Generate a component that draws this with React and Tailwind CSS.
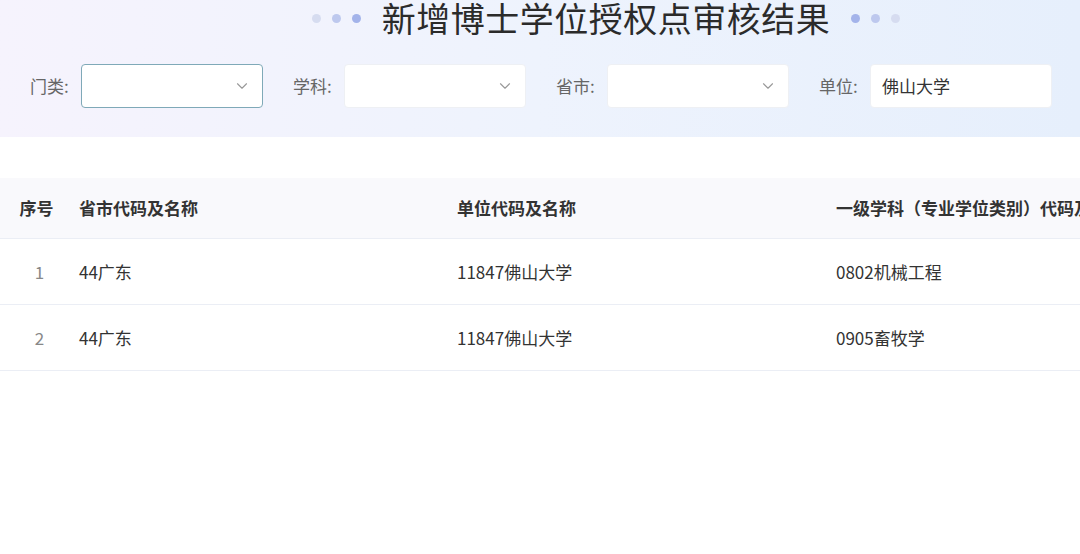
import { ChevronDown } from 'lucide-react';

const FILTERS = [
  { label: '门类', value: '', select: true, focused: true },
  { label: '学科', value: '', select: true },
  { label: '省市', value: '', select: true },
  { label: '单位', value: '佛山大学', select: false },
];

const ROWS = [
  { no: 1, province: '44广东', unit: '11847佛山大学', subject: '0802机械工程' },
  { no: 2, province: '44广东', unit: '11847佛山大学', subject: '0905畜牧学' },
];

export default function App() {
  return (
    <div
      className="w-[1080px] h-[554px] overflow-hidden bg-white text-[#333]"
      style={{ fontFamily: '"Noto Sans CJK SC", "Noto Sans", sans-serif' }}
    >
      {/* Header with gradient */}
      <div className="h-[137px] bg-gradient-to-r from-[#f6f3fd] via-[#eef3fd] to-[#e6effc]">
        <div className="flex items-center justify-center h-[36px] gap-[21px] pl-[132px]">
          <div className="flex items-center gap-[11px]">
            <span className="w-[9px] h-[9px] rounded-full bg-[#d6dcf0]" />
            <span className="w-[9px] h-[9px] rounded-full bg-[#bdc8ee]" />
            <span className="w-[9px] h-[9px] rounded-full bg-[#a3b3ea]" />
          </div>
          <h1 className="text-[34px] leading-[36px] font-normal text-[#2b2b2b] tracking-[0.5px] whitespace-nowrap">
            新增博士学位授权点审核结果
          </h1>
          <div className="flex items-center gap-[11px]">
            <span className="w-[9px] h-[9px] rounded-full bg-[#a3b3ea]" />
            <span className="w-[9px] h-[9px] rounded-full bg-[#bdc8ee]" />
            <span className="w-[9px] h-[9px] rounded-full bg-[#d6dcf0]" />
          </div>
        </div>

        <div className="flex items-center pl-[30px] mt-[28px] gap-[30px]">
          {FILTERS.map(f => (
            <div key={f.label} className="flex items-center">
              <span className="text-[17px] text-[#666] w-[51px]">{f.label}:</span>
              <div
                className={`w-[182px] h-[44px] rounded-[4px] bg-white flex items-center justify-between px-[11px] ${
                  f.focused ? 'border border-[#7fa9b8]' : 'border border-[#eef0f4]'
                }`}
              >
                <span className="text-[17px] text-[#333]">{f.value}</span>
                {f.select && <ChevronDown size={18} strokeWidth={1.5} className="text-[#999]" />}
              </div>
            </div>
          ))}
        </div>
      </div>

      {/* Table */}
      <div className="mt-[41px] w-[1400px]">
        <div className="flex h-[61px] items-center bg-[#f9f9fc] border-b border-[#ebeef5] text-[17px] font-bold text-[#333]">
          <div className="w-[67px] text-center pl-[6px]">序号</div>
          <div className="w-[378px] pl-[12px]">省市代码及名称</div>
          <div className="w-[379px] pl-[12px]">单位代码及名称</div>
          <div className="flex-1 pl-[12px] whitespace-nowrap">一级学科（专业学位类别）代码及名称</div>
        </div>
        {ROWS.map(r => (
          <div key={r.no} className="flex h-[66px] items-center border-b border-[#ebeef5] text-[17px] text-[#333]">
            <div className="w-[67px] text-center pl-[12px] text-[#888]">{r.no}</div>
            <div className="w-[378px] pl-[12px]">{r.province}</div>
            <div className="w-[379px] pl-[12px]">{r.unit}</div>
            <div className="flex-1 pl-[12px]">{r.subject}</div>
          </div>
        ))}
      </div>
    </div>
  );
}
